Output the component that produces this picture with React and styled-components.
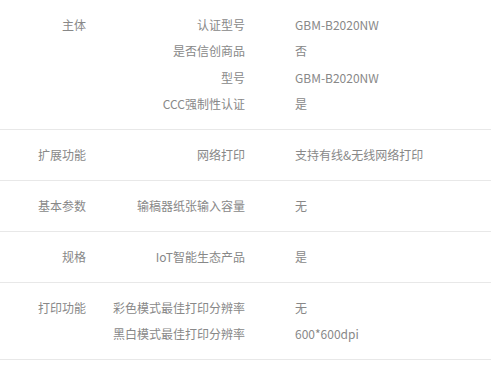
import React from 'react';
import styled, { createGlobalStyle } from 'styled-components';

const GlobalStyle = createGlobalStyle`
  body {
    margin: 0;
    background: #fff;
    font-family: "Microsoft YaHei", "Noto Sans CJK SC", sans-serif;
  }
`;

const specs = [
  {
    group: '主体',
    items: [
      ['认证型号', 'GBM-B2020NW'],
      ['是否信创商品', '否'],
      ['型号', 'GBM-B2020NW'],
      ['CCC强制性认证', '是'],
    ],
  },
  { group: '扩展功能', items: [['网络打印', '支持有线&无线网络打印']] },
  { group: '基本参数', items: [['输稿器纸张输入容量', '无']] },
  { group: '规格', items: [['IoT智能生态产品', '是']] },
  {
    group: '打印功能',
    items: [
      ['彩色模式最佳打印分辨率', '无'],
      ['黑白模式最佳打印分辨率', '600*600dpi'],
    ],
  },
];

const Table = styled.div`
  width: 100%;
`;

const Section = styled.div`
  display: flex;
  padding: 12px 0 11.67px;
  border-bottom: 1px solid #e8e8e8;
  font-size: 12px;
  line-height: 26.33px;
  color: #888;
`;

const Group = styled.div`
  width: 86px;
  text-align: right;
  flex-shrink: 0;
`;

const Items = styled.dl`
  margin: 0;
  display: grid;
  grid-template-columns: 159px 1fr;
  column-gap: 50px;
  flex: 1;
`;

const Key = styled.dt`
  text-align: right;
  white-space: nowrap;
`;

const Value = styled.dd`
  margin: 0;
  white-space: nowrap;
`;

export default function App() {
  return (
    <>
      <GlobalStyle />
      <Table>
        {specs.map((s) => (
          <Section key={s.group}>
            <Group>{s.group}</Group>
            <Items>
              {s.items.map(([k, v]) => (
                <React.Fragment key={k}>
                  <Key>{k}</Key>
                  <Value>{v}</Value>
                </React.Fragment>
              ))}
            </Items>
          </Section>
        ))}
      </Table>
    </>
  );
}
